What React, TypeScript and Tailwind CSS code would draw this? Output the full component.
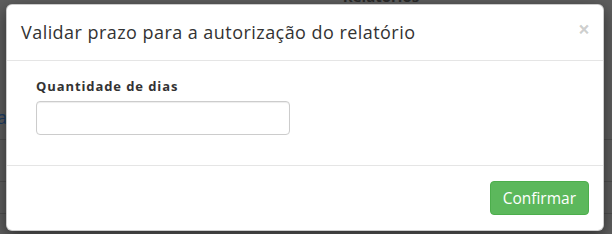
import React from 'react';

// page under the backdrop: only the table row lines and bits of text show through
function BackgroundPage() {
	return (
		<div className="flex flex-col w-full h-full" style={{ fontFamily: '"Open Sans", sans-serif' }}>
			<div className="h-[6px] flex justify-center overflow-hidden">
				<span className="ml-[150px] -mt-[14px] text-[15px] leading-[20px] text-[#2a2a2a] font-bold">Relatórios</span>
			</div>
			<div className="h-[100px]" />
			<div className="h-[34px] border-b border-[#4f4f4f] flex items-start">
				<span className="text-[18px] leading-[22px] text-[#1c3d66] -ml-[3px]">a</span>
			</div>
			<div className="h-[42px] border-b border-[#4f4f4f]" />
			<div className="h-[32px] border-b border-[#4f4f4f]" />
		</div>
	);
}

export default function App() {
	return (
		<div className="relative w-[612px] h-[234px] overflow-hidden bg-[#5e5e5e]">
			<BackgroundPage />
			<div
				className="absolute left-[6px] top-[4px] w-[598px] bg-white rounded-[6px] border border-black/20 shadow-[0_5px_15px_rgba(0,0,0,0.5)] flex flex-col"
				style={{ fontFamily: '"Open Sans", sans-serif' }}
			>
				<div className="relative px-[14px] py-[15px] border-b border-[#e5e5e5]">
					<h4 className="text-[18px] leading-[25px] text-[#333] tracking-[0.45px]">
						Validar prazo para a autorização do relatório
					</h4>
					<button className="absolute right-[13px] top-[14px] text-[21px] leading-[21px] font-bold text-black/20">
						×
					</button>
				</div>
				<div className="p-[15px]">
					<div className="px-[14px] pb-[15px]">
						<label className="block text-[13px] leading-[20px] font-bold text-[#333] mb-[5px] tracking-[0.9px]">
							Quantidade de dias
						</label>
						<input
							type="text"
							className="block w-[254px] h-[34px] border border-[#ccc] rounded-[4px] shadow-[inset_0_1px_1px_rgba(0,0,0,0.075)] px-3 text-[14px] outline-none"
						/>
					</div>
				</div>
				<div className="px-[14px] py-[15px] border-t border-[#e5e5e5] flex justify-end">
					<button className="h-[34px] px-[12px] bg-[#5cb85c] border border-[#4cae4c] rounded-[4px] text-white text-[15.5px] leading-[20px]">
						Confirmar
					</button>
				</div>
			</div>
		</div>
	);
}
